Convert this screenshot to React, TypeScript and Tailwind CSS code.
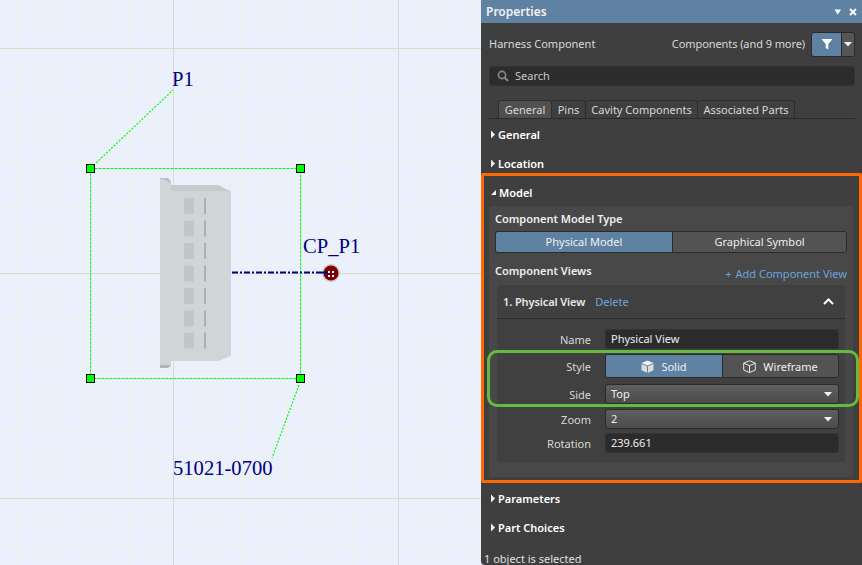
import React from "react";

const Caret = () => (
  <svg width="6" height="9" viewBox="0 0 6 9" className="shrink-0"><path d="M1 0.5 L5 4.5 L1 8.5 Z" fill="#f2f2f2" /></svg>
);
const Down = () => (
  <svg width="9" height="5" viewBox="0 0 9 5"><path d="M0 0 H8 L4 4.5 Z" fill="#f2f2f2" /></svg>
);

function Section({ title, className = "" }: { title: string; className?: string }) {
  return (
    <div className={"flex items-center h-[29px] pl-[9px] gap-[2px] font-semibold text-white " + className}>
      <Caret />
      <span>{title}</span>
    </div>
  );
}

function Row({ label, children, className = "" }: { label: string; children: React.ReactNode; className?: string }) {
  return (
    <div className={"flex items-center " + className}>
      <div className="w-[108px] pr-[14px] pt-[1px] text-right text-[#d8d8d8]">{label}</div>
      <div className="flex-1">{children}</div>
    </div>
  );
}

function Input({ value }: { value: string }) {
  return (
    <div className="h-[20px] w-[234px] rounded-[3px] bg-[#2b2b2b] border border-[#333] flex items-center px-[5px] text-[#f0f0f0]">{value}</div>
  );
}

function Select({ value }: { value: string }) {
  return (
    <div className="h-[20px] w-[234px] rounded-[3px] bg-gradient-to-b from-[#5f5f5f] to-[#4c4c4c] border border-[#2a2a2a] flex items-center justify-between px-[5px] text-[#f0f0f0]">
      <span>{value}</span>
      <Down />
    </div>
  );
}

function Canvas() {
  const minorX = Array.from({ length: 22 }, (_, i) => 15.5 + i * 22.5);
  const minorY = Array.from({ length: 26 }, (_, i) => 3.5 + i * 22.5);
  const slotsY = [198, 220.5, 243, 265.5, 288, 310.5, 332.5];
  return (
    <div className="relative w-[481px] h-full shrink-0 bg-[#eaf1fc] overflow-hidden">
      <svg width="481" height="565" className="block">
        {minorX.map((x) => (
          <line key={"x" + x} x1={Math.round(x) + 0.5} x2={Math.round(x) + 0.5} y1="0" y2="565" stroke="#f0f0e8" />
        ))}
        {minorY.map((y) => (
          <line key={"y" + y} y1={Math.round(y) + 0.5} y2={Math.round(y) + 0.5} x1="0" x2="481" stroke="#f0f0e8" />
        ))}
        {[173.5, 398.5].map((x) => (
          <line key={x} x1={x} x2={x} y1="0" y2="565" stroke="#d8d8d8" />
        ))}
        {[48.5, 273.5, 498.5].map((y) => (
          <line key={y} y1={y} y2={y} x1="0" x2="481" stroke="#d8d8d4" />
        ))}
        {/* connector body */}
        <path d="M160 178 H166 Q170 178 171 183 L171 185 H218 L231 191 V356 L218 361 H171 V364 Q170 368 166 368 H160 Z" fill="#ced6d8" />
        <path d="M171 185 H218 L228 191 H171 Z" fill="#c4cccf" />
        <path d="M160 365 H171 Q170 368 166 368 H160 Z" fill="#afb6b9" />
        <path d="M160 178 H166 Q170 178 171 183 H169 Q167 179 160 179 Z" fill="#b8bfc2" />
        {slotsY.map((y) => (
          <g key={y}>
            <rect x="184" y={y} width="10" height="16" fill="#bfc7ca" />
            <rect x="204" y={y} width="2" height="16" fill="#a9afb2" />
          </g>
        ))}
        {/* leader lines */}
        <line x1="96" y1="163" x2="173" y2="90" stroke="#00ff00" strokeWidth="1.2" strokeDasharray="2 1.5" />
        <line x1="299" y1="385" x2="272" y2="458" stroke="#00ff00" strokeWidth="1.2" strokeDasharray="2 1.5" />
        {/* selection */}
        <rect x="90.5" y="168.5" width="210" height="210" fill="none" stroke="#00ff00" strokeDasharray="3 1" />
        {[[90, 168], [300, 168], [90, 378], [300, 378]].map(([x, y]) => (
          <rect key={x + "-" + y} x={x - 3.5} y={y - 3.5} width="8" height="8" fill="#00ff00" stroke="#000" />
        ))}
        {/* wire */}
        <line x1="232" y1="272.5" x2="330" y2="272.5" stroke="#000080" strokeWidth="2" strokeDasharray="6 2 2 2" />
        {/* pin */}
        <circle cx="331" cy="273" r="9" fill="#c9c9c9" />
        <circle cx="331" cy="273" r="7.5" fill="#800000" />
        <line x1="322" y1="272.5" x2="331" y2="272.5" stroke="#000080" strokeWidth="2" />
        {[[328, 271], [332, 271], [328, 275], [332, 275]].map(([x, y]) => (
          <rect key={x + "_" + y} x={x} y={y} width="2" height="2" fill="#fff" />
        ))}
      </svg>
      <span className="absolute left-[172px] top-[67px] text-[20.6px] leading-[24px] text-[#000080] font-['Liberation_Serif',serif]">P1</span>
      <span className="absolute left-[303px] top-[234px] text-[20.6px] leading-[24px] text-[#000080] font-['Liberation_Serif',serif]">CP_P1</span>
      <span className="absolute left-[173px] top-[456px] text-[20.6px] leading-[24px] text-[#000080] font-['Liberation_Serif',serif]">51021-0700</span>
    </div>
  );
}

function Panel() {
  const tabs: [string, string][] = [
    ["Pins", "w-[34px]"],
    ["Cavity Components", "w-[112px]"],
    ["Associated Parts", "w-[97px]"],
  ];
  return (
    <div className="relative flex-1 h-full bg-[#3f3f3f] rounded-bl-[4px] text-[11px] leading-[14px] text-[#d8d8d8] font-['Noto_Sans',sans-serif] overflow-hidden">
      {/* title bar */}
      <div className="h-[23px] bg-[#5f82a3] flex items-center justify-between pl-[5px] pr-[5px]">
        <span className="font-semibold text-[12px] text-[#f2f2f2]">Properties</span>
        <div className="flex items-center gap-[7px]">
          <svg width="8" height="6" viewBox="0 0 8 6"><path d="M0.5 0.5 H7 L3.75 5.5 Z" fill="#fff" /></svg>
          <svg width="8" height="8" viewBox="0 0 8 8"><path d="M1 1 L7 7 M7 1 L1 7" stroke="#fff" strokeWidth="1.8" /></svg>
        </div>
      </div>
      {/* object row */}
      <div className="h-[43px] pb-[1px] flex items-center justify-between pl-[8px] pr-[7px]">
        <span>Harness Component</span>
        <div className="flex items-center gap-[6px]">
          <span className="tracking-[-0.08px]">Components (and 9 more)</span>
          <div className="flex h-[25px] w-[44px] rounded-[3px] border border-[#2a2a2a] overflow-hidden">
            <div className="w-[29px] bg-[#5f82a3] flex items-center justify-center">
              <svg width="12" height="12" viewBox="0 0 12 12"><path d="M0.5 1 H11.5 L7.3 6 V11.5 L4.7 10 V6 Z" fill="#fff" /></svg>
            </div>
            <div className="flex-1 bg-[#555] border-l border-[#2a2a2a] flex items-center justify-center"><Down /></div>
          </div>
        </div>
      </div>
      {/* search */}
      <div className="mx-[8px] mr-[7px] h-[20px] rounded-[3px] bg-[#2c2c2c] border border-[#333] flex items-center pl-[7px] gap-[6px] text-[#c8c8c8]">
        <svg width="12" height="12" viewBox="0 0 12 12" fill="none"><circle cx="5" cy="5" r="3.6" stroke="#8a8a8a" strokeWidth="1.6" /><path d="M7.8 7.8 L11 11" stroke="#8a8a8a" strokeWidth="2" /></svg>
        <span>Search</span>
      </div>
      {/* tabs */}
      <div className="mt-[14px] mx-[8px] mr-[7px] h-[19px] border-b border-[#2a2a2a] flex pl-[9px]">
        <div className="h-[18px] w-[54px] flex items-center justify-center bg-[#505050] border border-[#2e2e2e] border-b-0 rounded-t-[3px]">General</div>
        {tabs.map(([t, w]) => (
          <div key={t} className={"h-[18px] flex items-center justify-center border border-l-0 border-[#2e2e2e] border-b-0 rounded-t-[3px] " + w}>{t}</div>
        ))}
      </div>
      <Section title="General" className="mt-[1px]" />
      <Section title="Location" />
      {/* model */}
      <div className="flex items-center h-[27px] pl-[10px] gap-[3px] font-semibold text-white mt-[1px]">
        <svg width="5" height="5" viewBox="0 0 5 5"><path d="M0 5 H5 V0 Z" fill="#f2f2f2" /></svg>
        <span>Model</span>
      </div>
      <div className="ml-[8px] mr-[9px] h-[271px] bg-[#484848] rounded-[3px] px-[6px]">
        <div className="h-[25px] flex items-center font-semibold text-[#f0f0f0]">Component Model Type</div>
        <div className="h-[22px] flex rounded-[3px] border border-[#2a2a2a] overflow-hidden">
          <div className="w-[176px] bg-[#5f82a3] flex items-center justify-center text-[#f0f0f0]">Physical Model</div>
          <div className="flex-1 bg-[#535353] border-l border-[#2a2a2a] flex items-center justify-center text-[#eee]">Graphical Symbol</div>
        </div>
        <div className="h-[32px] flex items-start justify-between">
          <span className="font-semibold text-[#f0f0f0] mt-[11px]">Component Views</span>
          <span className="text-[#6ea3dd] mt-[14px] flex gap-[4px]"><span>+</span><span>Add Component View</span></span>
        </div>
        <div className="mx-[2px] h-[177px] bg-[#404040] rounded-[3px] w-[348px]">
          <div className="h-[34px] border-b border-[#2b2b2b] flex items-center pl-[6px] pr-[11px]">
            <span className="font-semibold text-[#e8e8e8] tracking-[-0.1px]">1. Physical View</span>
            <span className="ml-[10px] text-[#6ea3dd]">Delete</span>
            <svg className="ml-auto" width="11" height="7" viewBox="0 0 11 7" fill="none"><path d="M1 6 L5.5 1.5 L10 6" stroke="#fff" strokeWidth="2" /></svg>
          </div>
          <Row label="Name" className="mt-[10px]"><Input value="Physical View" /></Row>
          <Row label="Style" className="mt-[5px]">
            <div className="h-[24px] w-[234px] flex rounded-[3px] border border-[#2a2a2a] overflow-hidden">
              <div className="w-[116px] pt-[1px] bg-[#5f82a3] flex items-center justify-center gap-[7px] text-[#f0f0f0]">
                <svg width="13" height="13" viewBox="0 0 13 13"><path d="M6.5 0.5 L12.5 3 L6.5 5.5 L0.5 3 Z" fill="#f0f0f0" /><path d="M0.5 4 L6 6.3 V12.7 L0.5 10.3 Z M12.5 4 L7 6.3 V12.7 L12.5 10.3 Z" fill="#dcdcdc" /></svg>
                <span>Solid</span>
              </div>
              <div className="flex-1 pt-[1px] bg-[#535353] border-l border-[#2a2a2a] flex items-center justify-center gap-[7px] text-[#f0f0f0]">
                <svg width="13" height="13" viewBox="0 0 13 13" fill="none" stroke="#e8e8e8"><path d="M6.5 0.7 L12.3 3.2 V10 L6.5 12.5 L0.7 10 V3.2 Z M0.7 3.2 L6.5 5.7 L12.3 3.2 M6.5 5.7 V12.5" /></svg>
                <span>Wireframe</span>
              </div>
            </div>
          </Row>
          <Row label="Side" className="mt-[6px]"><Select value="Top" /></Row>
          <Row label="Zoom" className="mt-[5px]"><Select value="2" /></Row>
          <Row label="Rotation" className="mt-[4px]"><Input value="239.661" /></Row>
        </div>
      </div>
      <Section title="Parameters" className="mt-[7px]" />
      <Section title="Part Choices" />
      <div className="absolute left-[3px] bottom-[-1px] text-[#e0e0e0]">1 object is selected</div>
      {/* highlight overlays */}
      <div className="absolute left-0 top-[173px] w-[381px] h-[310px] border-[3px] border-[#ff6a00] rounded-[2px]" />
      <div className="absolute left-[6px] top-[350px] w-[372px] h-[57px] border-[3px] border-[#63bb3f] rounded-[10px]" />
    </div>
  );
}

export default function App() {
  return (
    <div className="flex w-[862px] h-[565px] overflow-hidden bg-[#eaf1fc]">
      <Canvas />
      <Panel />
    </div>
  );
}
